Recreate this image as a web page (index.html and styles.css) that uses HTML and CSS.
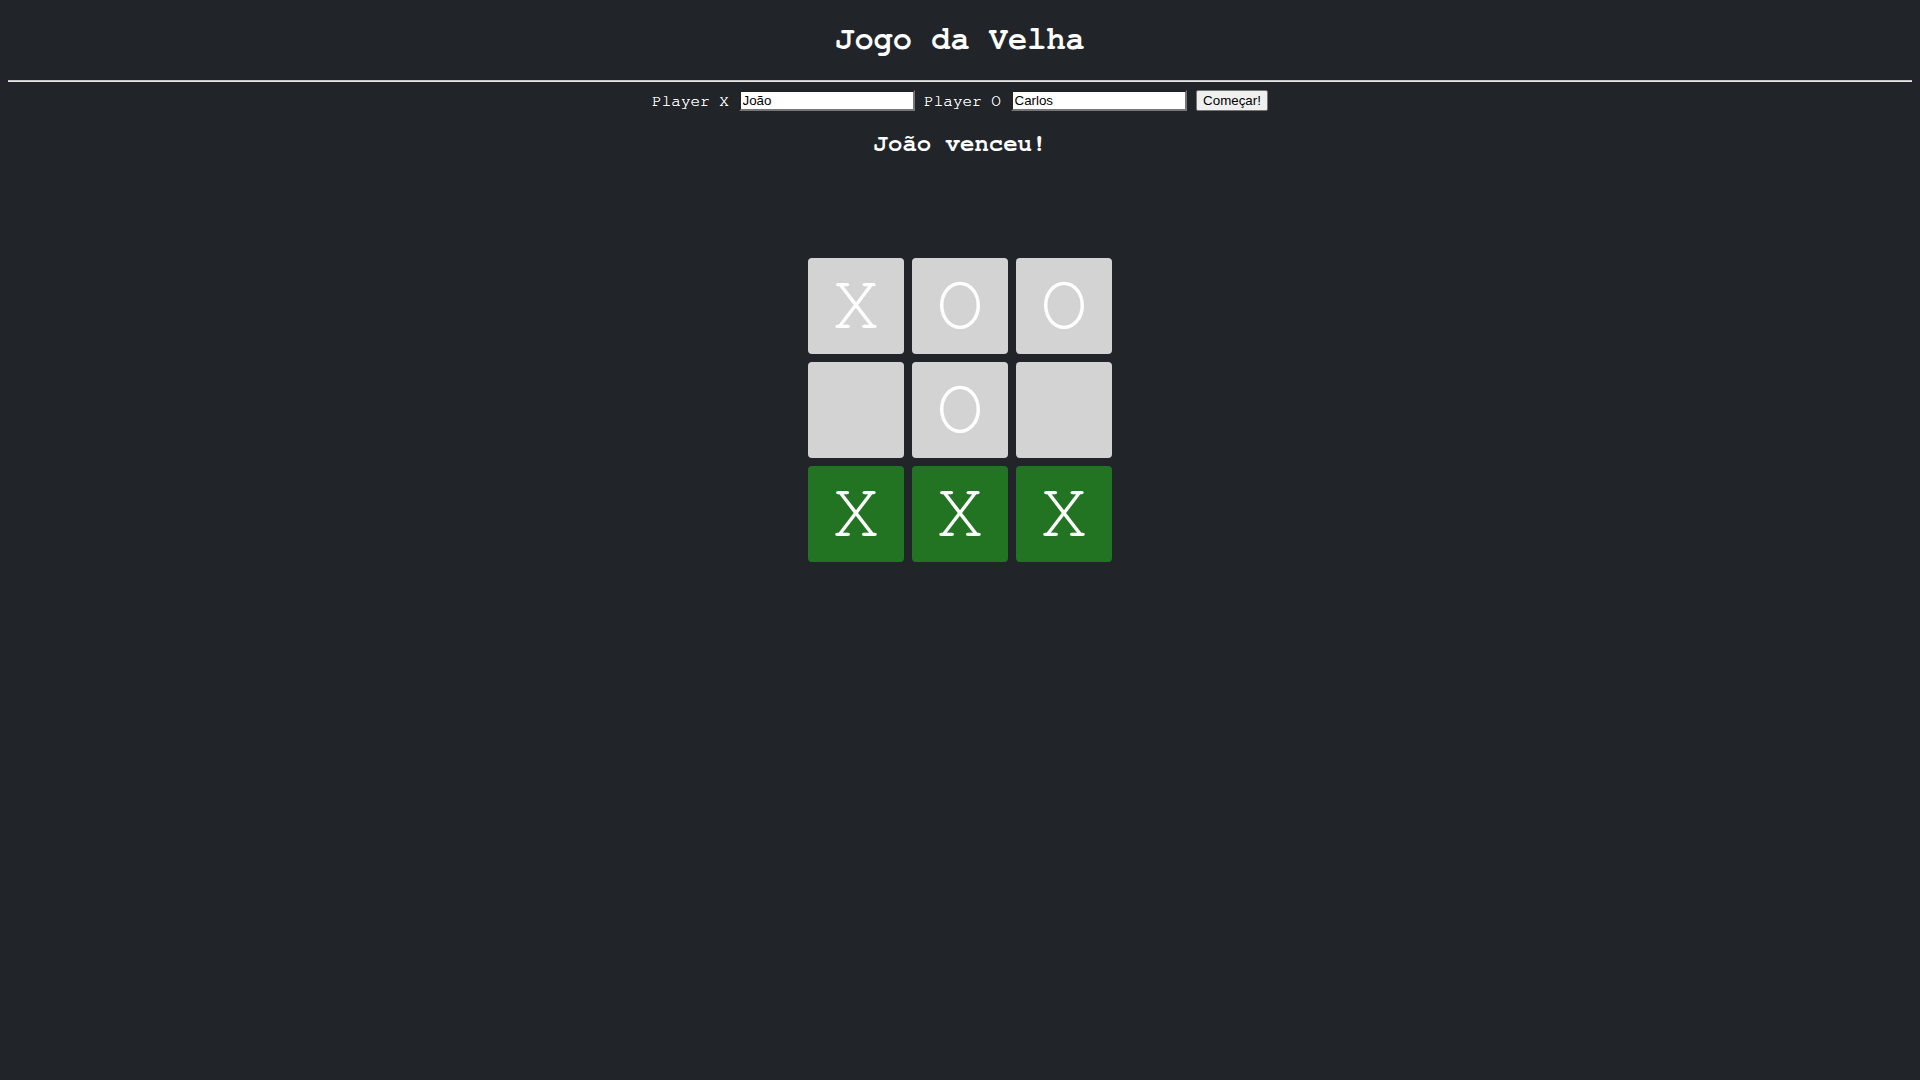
FILE: index.html
```html
<!DOCTYPE html>
<html lang="pt-BR">
<head>
<meta charset="utf-8">
<title>Jogo da Velha</title>
<link rel="stylesheet" href="styles.css">
</head>
<body>
  <h1 class="title">Jogo da Velha</h1>
  <hr class="divider">
  <div class="controls">
    <label class="player-label" for="px">Player X</label>
    <input class="player-input" id="px" type="text" value="João">
    <label class="player-label" for="po">Player O</label>
    <input class="player-input" id="po" type="text" value="Carlos">
    <button class="start-btn" type="button">Começar!</button>
  </div>
  <h2 class="status">João venceu!</h2>
  <div class="board">
    <div class="cell"><span class="mark">X</span></div>
    <div class="cell"><span class="mark">O</span></div>
    <div class="cell"><span class="mark">O</span></div>
    <div class="cell"></div>
    <div class="cell"><span class="mark">O</span></div>
    <div class="cell"></div>
    <div class="cell win"><span class="mark">X</span></div>
    <div class="cell win"><span class="mark">X</span></div>
    <div class="cell win"><span class="mark">X</span></div>
  </div>
</body>
</html>
```
FILE: styles.css
```css
html, body {
  background: #212529;
}
body {
  margin: 0;
  padding: 0 8px;
  min-height: 1080px;
  box-sizing: border-box;
  color: #ffffff;
  font-family: "Nimbus Mono PS", "Nimbus Mono L", "FreeMono", "Courier", "Liberation Mono", monospace;
  font-size: 16px;
}
.title {
  margin: 21px 0 0;
  font-size: 32px;
  line-height: 36px;
  font-weight: bold;
  text-align: center;
}
.divider {
  margin: 23px 0 0;
  height: 0;
  border: 0;
  border-top: 1px solid #c4c4c4;
  border-bottom: 1px solid #e6e6e6;
}
.controls {
  margin-top: 8px;
  display: flex;
  justify-content: center;
  align-items: center;
  gap: 9.6px;
  height: 21px;
}
.player-label {
  font-size: 16px;
  color: #ffffff;
  text-shadow: 0 0 0.4px #ffffff;
}
.player-input {
  box-sizing: border-box;
  width: 176px;
  height: 21px;
  margin: 0;
  padding: 1px 2px;
  border: 2px inset #767676;
  border-radius: 0;
  background: #ffffff;
  color: #000000;
  font-family: "Liberation Sans", Arial, sans-serif;
  font-size: 13.333px;
}
.start-btn {
  box-sizing: border-box;
  height: 21px;
  margin: 0;
  padding: 1px 6px;
  border: 1px solid #767676;
  border-radius: 2px;
  background: #efefef;
  color: #000000;
  font-family: "Liberation Sans", Arial, sans-serif;
  font-size: 13.333px;
}
.status {
  margin: 19px 0 0;
  font-size: 24px;
  line-height: 28px;
  font-weight: bold;
  text-align: center;
}
.board {
  margin: 100px auto 0;
  display: grid;
  grid-template-columns: repeat(3, 96px);
  grid-auto-rows: 96px;
  gap: 8px;
  width: 304px;
}
.cell {
  background: #d3d3d3;
  border-radius: 4px;
  display: flex;
  align-items: center;
  justify-content: center;
}
.cell.win {
  background: #227422;
}
.mark {
  font-size: 80px;
  line-height: 1;
  padding-bottom: 5px;
  color: #ffffff;
}
```
